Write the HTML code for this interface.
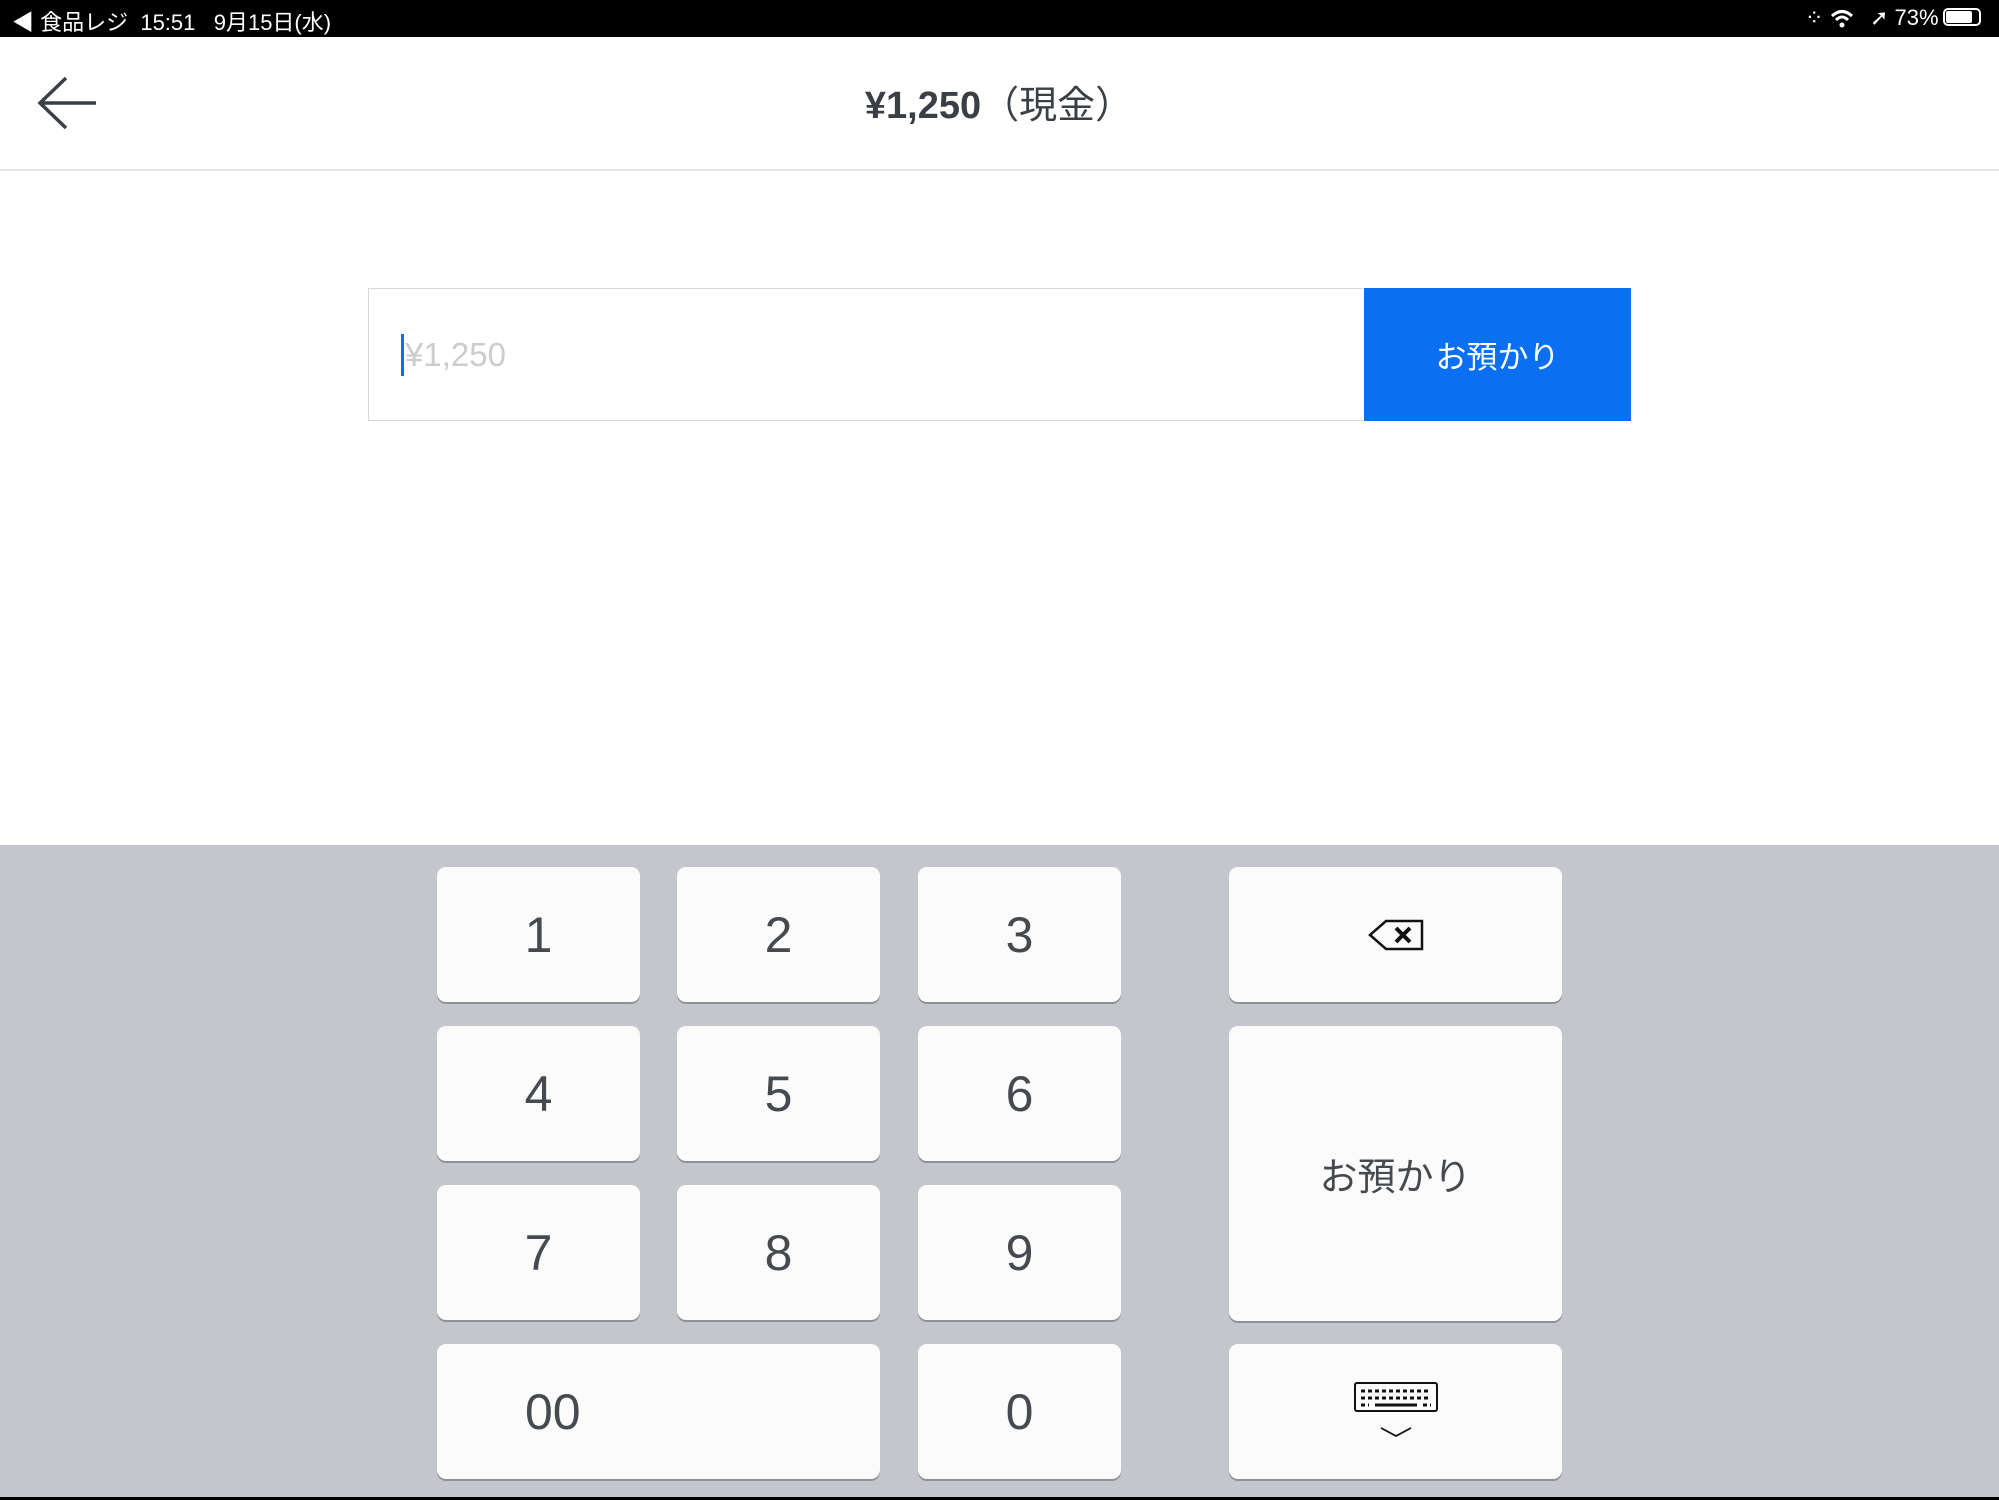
<!DOCTYPE html>
<html><head><meta charset="utf-8"><style>
body{margin:0;width:1999px;height:1500px;position:relative;background:#fff;font-family:"Liberation Sans","Noto Sans CJK JP",sans-serif;overflow:hidden}
.sb{position:absolute;left:0;top:0;width:1999px;height:37px;background:#000;color:#fff;font-size:22px}
.hd{position:absolute;left:0;top:37px;width:1999px;height:132px;border-bottom:2px solid #e4e4e4}
.title{position:absolute;top:74px;left:0;width:1998px;text-align:center;font-size:38px;color:#3a3f45;font-weight:bold}
.inp{position:absolute;left:368px;top:288px;width:994px;height:131px;border:1px solid #d8d8d8;border-right:none}
.btn{position:absolute;left:1364px;top:288px;width:267px;height:133px;background:#0a6ff0;color:#fff;font-size:31px;display:flex;align-items:center;justify-content:center}
.kb{position:absolute;left:0;top:845px;width:1999px;height:652px;background:#c3c7cb;border-bottom:3px solid #000}
.k{position:absolute;background:#fbfbfb;border-radius:9px;box-shadow:0 2px 0 #8d9095;display:flex;align-items:center;justify-content:center;font-size:50px;color:#454a50}
</style></head><body>
<div class="sb"><span style="position:absolute;left:12px;top:5px">◀ 食品レジ&nbsp;&nbsp;15:51&nbsp;&nbsp;&nbsp;9月15日(水)</span>
<span style="position:absolute;left:1805px;top:5px;">⁘</span>
<svg style="position:absolute;left:1830px;top:9px" width="24" height="20"><path d="M2 7Q12 -2 22 7" stroke="#fff" stroke-width="3" fill="none"/><path d="M6 11Q12 5 18 11" stroke="#fff" stroke-width="3" fill="none"/><circle cx="12" cy="16" r="2.5" fill="#fff"/></svg>
<span style="position:absolute;left:1870px;top:5px">➚ 73%</span>
<div style="position:absolute;left:1943px;top:8px;width:38px;height:18px;border:2px solid #fff;border-radius:5px;box-sizing:border-box"><div style="width:26px;height:12px;margin:1px;background:#fff;border-radius:2px"></div></div></div>
<div class="hd"></div>
<svg style="position:absolute;left:36px;top:76px" width="64" height="56"><path d="M60 27H4M30 2L4 27L30 52" stroke="#3a3f45" stroke-width="3.5" fill="none"/></svg>
<div class="title">¥1,250<span style="font-weight:normal">（現金）</span></div>
<div class="inp"><div style="position:absolute;left:32px;top:45px;width:3px;height:42px;background:#0a6ff0"></div><span style="position:absolute;left:36px;top:47px;font-size:33px;color:#ccc">¥1,250</span></div>
<div class="btn">お預かり</div>
<div class="kb"></div>
<div class="k" style="left:437px;top:867px;width:203px;height:135px">1</div>
<div class="k" style="left:677px;top:867px;width:203px;height:135px">2</div>
<div class="k" style="left:918px;top:867px;width:203px;height:135px">3</div>
<div class="k" style="left:437px;top:1026px;width:203px;height:135px">4</div>
<div class="k" style="left:677px;top:1026px;width:203px;height:135px">5</div>
<div class="k" style="left:918px;top:1026px;width:203px;height:135px">6</div>
<div class="k" style="left:437px;top:1185px;width:203px;height:135px">7</div>
<div class="k" style="left:677px;top:1185px;width:203px;height:135px">8</div>
<div class="k" style="left:918px;top:1185px;width:203px;height:135px">9</div>
<div class="k" style="left:437px;top:1344px;width:443px;height:135px;justify-content:flex-start;padding-left:88px;box-sizing:border-box">00</div>
<div class="k" style="left:918px;top:1344px;width:203px;height:135px">0</div>
<div class="k" style="left:1229px;top:867px;width:333px;height:135px"><svg width="56" height="32"><path d="M18 2H54V30H18L2 16Z" stroke="#111" stroke-width="2.5" fill="none"/><path d="M28 9L42 23M42 9L28 23" stroke="#111" stroke-width="4"/></svg></div>
<div class="k" style="left:1229px;top:1026px;width:333px;height:295px;font-size:38px">お預かり</div>
<div class="k" style="left:1229px;top:1344px;width:333px;height:135px"><svg width="86" height="62"><rect x="2" y="2" width="82" height="28" rx="2" stroke="#111" stroke-width="2" fill="none"/><path d="M8 10H78M8 17H78M8 24H16M22 24H64M70 24H78" stroke="#111" stroke-width="3" stroke-dasharray="4 3"/><path d="M22 24H64" stroke="#111" stroke-width="3"/><path d="M28 47L43 55L58 47" stroke="#111" stroke-width="1.8" fill="none"/></svg></div>
</body></html>
